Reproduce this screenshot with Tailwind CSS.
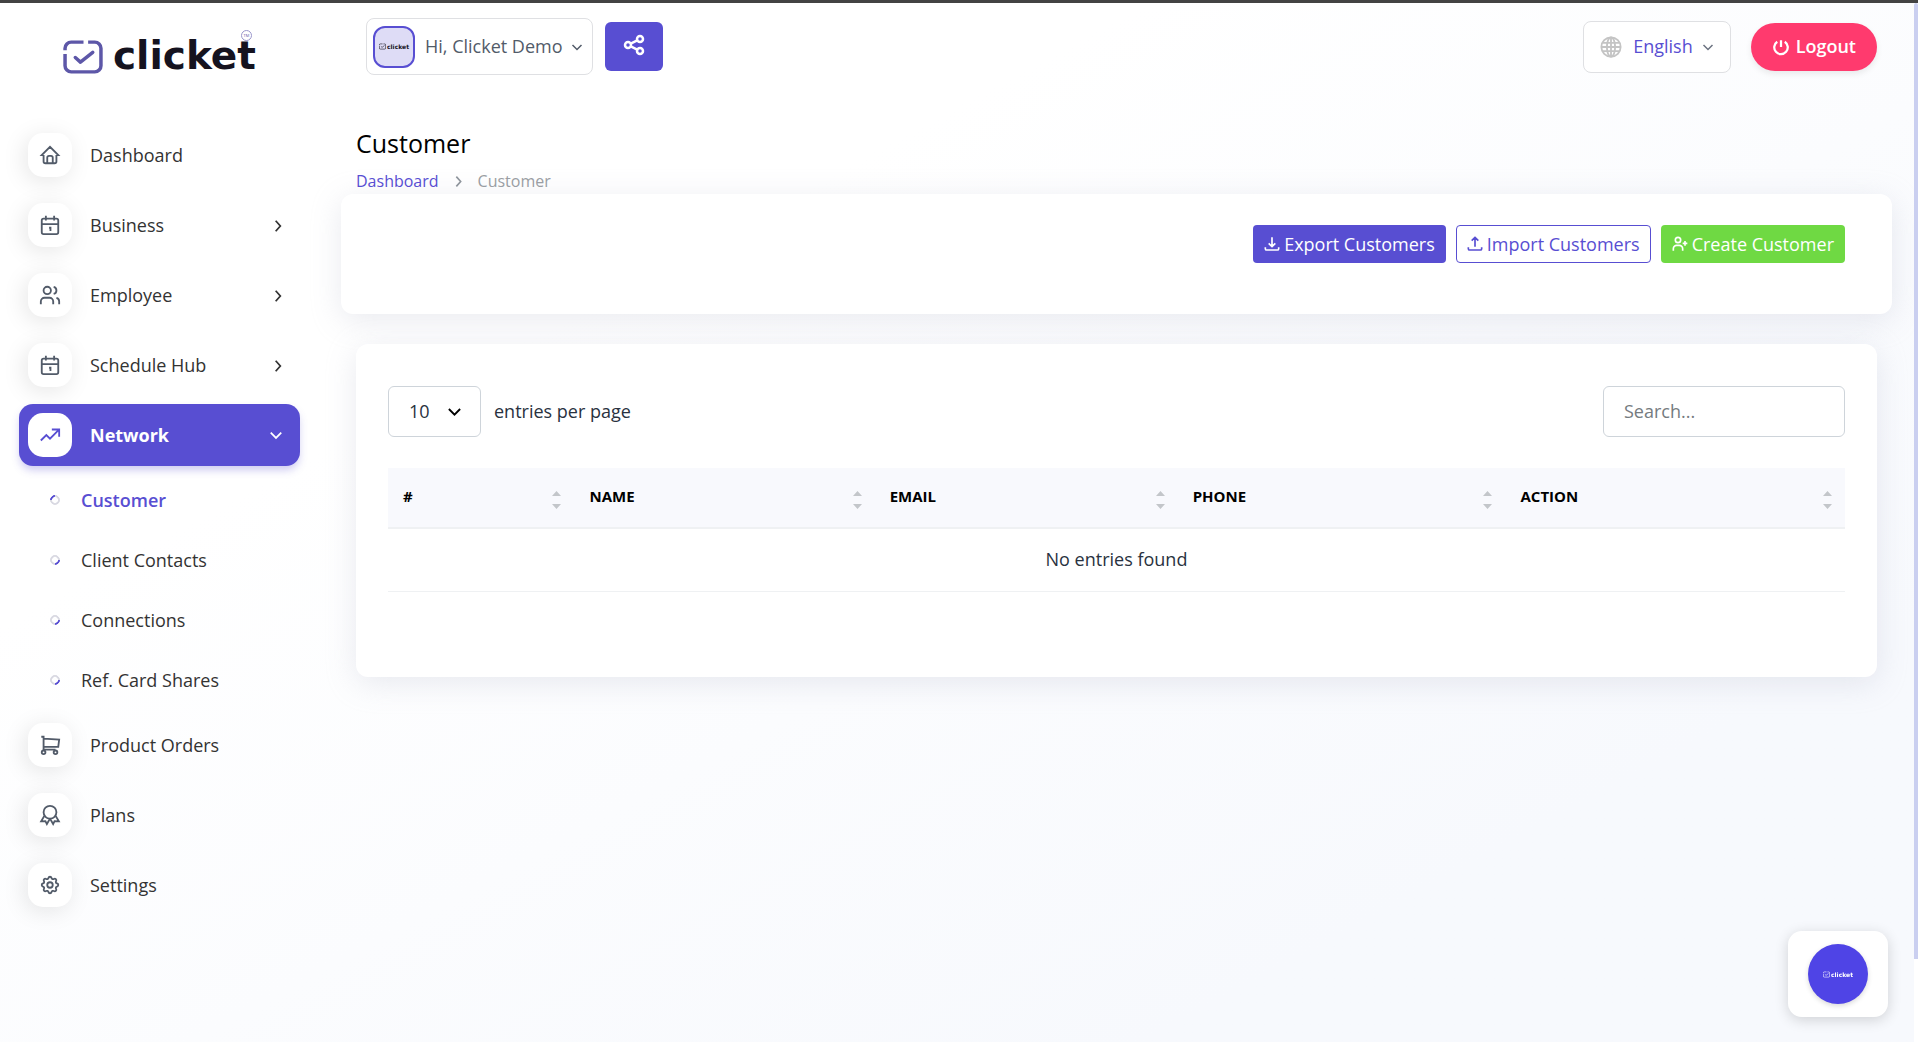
<!DOCTYPE html>
<html lang="en">
  <head>
    <title>Customer - Clicket</title>
    <meta charset="UTF-8" />
    <meta name="viewport" content="width=device-width, initial-scale=1.0" />
    <script src="https://cdn.jsdelivr.net/npm/@tailwindcss/browser@4"></script>
  </head>
  <body class="min-h-screen overflow-x-hidden border-t-3 border-[#434343] bg-linear-to-br from-white from-30% to-[#f7f9fd] to-80% font-['Open_Sans',sans-serif] text-[18px] text-[#293240]">
    <!-- Icon sprite -->
    <svg class="hidden">
      <symbol id="mark" viewBox="0 0 39 33" fill="none" stroke="currentColor" stroke-width="3.4">
        <path d="M2 10V8a6 6 0 0 1 6-6h12M24.500 2H31a6 6 0 0 1 6 6v17a6 6 0 0 1-6 6H8a6 6 0 0 1-6-6V13.500" />
        <path d="M12 17l5 4.500 12-9.500" stroke-linecap="round" stroke-linejoin="round" />
      </symbol>
      <symbol id="home" viewBox="0 0 24 24"><path d="M5 12H3l9-9 9 9h-2M5 12v7a2 2 0 0 0 2 2h10a2 2 0 0 0 2-2v-7M9 21v-6a2 2 0 0 1 2-2h2a2 2 0 0 1 2 2v6" /></symbol>
      <symbol id="calendar" viewBox="0 0 24 24"><rect x="3" y="5" width="18" height="17" rx="2" /><path d="M7.500 2v5M16.500 2v5M3 11h18M11 15h1.500v3.500" /></symbol>
      <symbol id="users" viewBox="0 0 24 24"><circle cx="9" cy="7" r="4" /><path d="M2 22v-3a4 4 0 0 1 4-4h5.500a4 4 0 0 1 4 4v3M16 3.130a4 4 0 0 1 0 7.750M22 22v-3a4 4 0 0 0-3-3.850" /></symbol>
      <symbol id="trending" viewBox="0 0 24 24"><path d="M2 18l6-6 4 4 9-9M14 6h8v8" /></symbol>
      <symbol id="cart" viewBox="0 0 24 24"><circle cx="5" cy="20" r="2" /><circle cx="18" cy="20" r="2" /><path d="M18 17H5V3H2.500M5 5l17 1-1 8H5" /></symbol>
      <symbol id="award" viewBox="0 0 24 24"><circle cx="12" cy="9" r="7" /><path d="M12 16l3.400 5.890 1.600-3.230 4.600.230-3.400-5.890M5.800 13l-3.400 5.890 4.600-.230 1.600 3.230 3.400-5.890" /></symbol>
      <symbol id="settings" viewBox="0 0 24 24"><path d="M10.325 4.317c.426-1.756 2.924-1.756 3.350 0a1.724 1.724 0 0 0 2.573 1.066c1.543-.940 3.310.826 2.370 2.370a1.724 1.724 0 0 0 1.065 2.572c1.756.426 1.756 2.924 0 3.350a1.724 1.724 0 0 0-1.066 2.573c.940 1.543-.826 3.310-2.370 2.370a1.724 1.724 0 0 0-2.572 1.065c-.426 1.756-2.924 1.756-3.350 0a1.724 1.724 0 0 0-2.573-1.066c-1.543.940-3.310-.826-2.370-2.370a1.724 1.724 0 0 0-1.065-2.572c-1.756-.426-1.756-2.924 0-3.350a1.724 1.724 0 0 0 1.066-2.573c-.940-1.543.826-3.310 2.370-2.370 1 .608 2.296.070 2.572-1.065z" /><circle cx="12" cy="12" r="3" /></symbol>
      <symbol id="share" viewBox="0 0 24 24"><circle cx="6" cy="12" r="3" /><circle cx="18" cy="6" r="3" /><circle cx="18" cy="18" r="3" /><path d="M8.700 10.700l6.600-3.400M8.700 13.300l6.600 3.400" /></symbol>
      <symbol id="power" viewBox="0 0 24 24"><path d="M7 5a9 9 0 1 0 10 0M12 3v9" /></symbol>
      <symbol id="globe" viewBox="0 0 24 24"><circle cx="12" cy="12" r="10.500" /><ellipse cx="12" cy="12" rx="4.500" ry="10.500" /><path d="M12 1.500v21M1.500 12h21M3 7.500h18M3 16.500h18" /></symbol>
      <symbol id="download" viewBox="0 0 24 24"><path d="M2 17v2a2 2 0 0 0 2 2h16a2 2 0 0 0 2-2v-2M7 11l5 5 5-5M12 2v14" /></symbol>
      <symbol id="upload" viewBox="0 0 24 24"><path d="M2 17v2a2 2 0 0 0 2 2h16a2 2 0 0 0 2-2v-2M7 7l5-5 5 5M12 3v13" /></symbol>
      <symbol id="user-plus" viewBox="0 0 24 24"><circle cx="9" cy="6" r="4" /><path d="M2 22v-3a5 5 0 0 1 5-5h4a5 5 0 0 1 5 5v3M16 11h7M19.500 7.500v7" /></symbol>
      <symbol id="chevron-right" viewBox="0 0 24 24"><path d="M8 3l8 9-8 9" /></symbol>
      <symbol id="chevron-down" viewBox="0 0 24 24"><path d="M3 8l9 9 9-9" /></symbol>
    </svg>

    <div class="flex items-start">
      <aside class="w-[319px] shrink-0 pb-8">
        <a href="#" class="flex h-[121px] items-start pt-[27px] pl-[63px] text-[#15131f]" aria-label="clicket">
          <svg class="mt-[10px] h-[34px] w-[40px] text-[#5d57a8]"><use href="#mark" /></svg>
          <span class="relative ml-[10px]">
            <span class="block font-['DejaVu_Sans'] text-[39px] leading-[52px] font-bold">clicket</span>
            <span class="absolute top-0 right-1 flex size-[11px] items-center justify-center rounded-full border border-[#9a96cc] text-[4px] leading-none text-[#5d57a8]">TM</span>
          </span>
        </a>

        <nav class="flex flex-col gap-2 pr-[19px] pl-[19px] font-medium text-[#333]">
          <a href="#" class="flex h-[62px] items-center gap-[18px] pr-[15px] pl-[9px]">
            <span class="flex size-11 items-center justify-center rounded-[15px] bg-white text-[#525b69] shadow-[-3px_4px_23px_rgba(0,0,0,0.1)]"><svg class="size-[22px] fill-none stroke-current stroke-2"><use href="#home" /></svg></span>
            Dashboard
          </a>
          <a href="#" class="flex h-[62px] items-center gap-[18px] pr-[15px] pl-[9px]">
            <span class="flex size-11 items-center justify-center rounded-[15px] bg-white text-[#525b69] shadow-[-3px_4px_23px_rgba(0,0,0,0.1)]"><svg class="size-[22px] fill-none stroke-current stroke-2"><use href="#calendar" /></svg></span>
            Business
            <svg class="mt-[2px] ml-auto size-[14px] fill-none stroke-current stroke-3"><use href="#chevron-right" /></svg>
          </a>
          <a href="#" class="flex h-[62px] items-center gap-[18px] pr-[15px] pl-[9px]">
            <span class="flex size-11 items-center justify-center rounded-[15px] bg-white text-[#525b69] shadow-[-3px_4px_23px_rgba(0,0,0,0.1)]"><svg class="size-[22px] fill-none stroke-current stroke-2"><use href="#users" /></svg></span>
            Employee
            <svg class="mt-[2px] ml-auto size-[14px] fill-none stroke-current stroke-3"><use href="#chevron-right" /></svg>
          </a>
          <a href="#" class="flex h-[62px] items-center gap-[18px] pr-[15px] pl-[9px]">
            <span class="flex size-11 items-center justify-center rounded-[15px] bg-white text-[#525b69] shadow-[-3px_4px_23px_rgba(0,0,0,0.1)]"><svg class="size-[22px] fill-none stroke-current stroke-2"><use href="#calendar" /></svg></span>
            Schedule Hub
            <svg class="mt-[2px] ml-auto size-[14px] fill-none stroke-current stroke-3"><use href="#chevron-right" /></svg>
          </a>
          <div>
            <a href="#" class="flex h-[62px] items-center gap-[18px] rounded-[14px] bg-[#584ed2] pr-[17px] pl-[9px] font-bold text-white shadow-[0_5px_8px_-1px_rgba(88,78,210,0.3)]">
              <span class="flex size-11 items-center justify-center rounded-[15px] bg-white text-[#584ed2]"><svg class="size-[22px] fill-none stroke-current stroke-2"><use href="#trending" /></svg></span>
              Network
              <svg class="ml-auto size-[14px] fill-none stroke-current stroke-3"><use href="#chevron-down" /></svg>
            </a>
            <ul class="mt-1 -mb-1 pl-[31px] font-normal">
              <li><a href="#" class="flex h-[60px] items-center gap-[21px] font-semibold text-[#584ed2]"><span class="size-[10px] rotate-45 rounded-full border-2 border-[#d9d9e2] border-l-[#584ed2]"></span>Customer</a></li>
              <li><a href="#" class="flex h-[60px] items-center gap-[21px]"><span class="size-[10px] rotate-45 rounded-full border-2 border-[#d9d9e2] border-r-[#584ed2]"></span>Client Contacts</a></li>
              <li><a href="#" class="flex h-[60px] items-center gap-[21px]"><span class="size-[10px] rotate-45 rounded-full border-2 border-[#d9d9e2] border-r-[#584ed2]"></span>Connections</a></li>
              <li><a href="#" class="flex h-[60px] items-center gap-[21px]"><span class="size-[10px] rotate-45 rounded-full border-2 border-[#d9d9e2] border-r-[#584ed2]"></span>Ref. Card Shares</a></li>
            </ul>
          </div>
          <a href="#" class="flex h-[62px] items-center gap-[18px] pr-[15px] pl-[9px]">
            <span class="flex size-11 items-center justify-center rounded-[15px] bg-white text-[#525b69] shadow-[-3px_4px_23px_rgba(0,0,0,0.1)]"><svg class="size-[22px] fill-none stroke-current stroke-2"><use href="#cart" /></svg></span>
            Product Orders
          </a>
          <a href="#" class="flex h-[62px] items-center gap-[18px] pr-[15px] pl-[9px]">
            <span class="flex size-11 items-center justify-center rounded-[15px] bg-white text-[#525b69] shadow-[-3px_4px_23px_rgba(0,0,0,0.1)]"><svg class="size-[22px] fill-none stroke-current stroke-2"><use href="#award" /></svg></span>
            Plans
          </a>
          <a href="#" class="flex h-[62px] items-center gap-[18px] pr-[15px] pl-[9px]">
            <span class="flex size-11 items-center justify-center rounded-[15px] bg-white text-[#525b69] shadow-[-3px_4px_23px_rgba(0,0,0,0.1)]"><svg class="size-[22px] fill-none stroke-current stroke-2"><use href="#settings" /></svg></span>
            Settings
          </a>
        </nav>
      </aside>

      <div class="min-w-0 flex-1 pr-[41px] pl-[37px]">
        <header class="flex h-[87px] items-center pl-[10px]">
          <button type="button" class="flex h-[57px] items-center rounded-lg border border-[#dfe0e3] bg-white px-[6px] text-[#525b69]">
            <span class="flex size-[42px] items-center justify-center gap-px rounded-xl border-2 border-[#584ed2] bg-[#dedcf6] font-['DejaVu_Sans'] text-[6px] font-bold text-[#15131f]"><svg class="size-[7px]"><use href="#mark" /></svg>clicket</span>
            <span class="ml-[10px]">Hi, Clicket Demo</span>
            <svg class="mr-[3px] ml-2 size-3 fill-none stroke-current stroke-3"><use href="#chevron-down" /></svg>
          </button>
          <button type="button" aria-label="Share" class="ml-3 flex h-[49px] w-[58px] items-center justify-center rounded-md bg-[#584ed2] pb-1 text-white">
            <svg class="size-6 fill-none stroke-current stroke-[2.5]"><use href="#share" /></svg>
          </button>
          <button type="button" class="ml-auto flex h-[52px] items-center rounded-lg border border-[#dfe0e3] bg-white px-4 text-[#584ed2]">
            <svg class="size-[22px] fill-none stroke-[#c4c4c4] stroke-2"><use href="#globe" /></svg>
            <span class="ml-[11px]">English</span>
            <svg class="ml-[9px] size-3 fill-none stroke-[#6b7280] stroke-3"><use href="#chevron-down" /></svg>
          </button>
          <button type="button" class="ml-5 flex h-12 items-center gap-[6px] rounded-full bg-[#ff3a6e] px-[21px] font-semibold text-white shadow-[0_3px_6px_rgba(0,0,0,0.08)]">
            <svg class="size-[18px] fill-none stroke-current stroke-3"><use href="#power" /></svg>
            Logout
          </button>
        </header>

        <main class="pt-[37px]">
          <h1 class="text-[25px] leading-8 font-medium text-black">Customer</h1>
          <nav class="mt-[10px] flex items-center text-base leading-6">
            <a href="#" class="text-[#584ed2]">Dashboard</a>
            <svg class="mx-[13px] size-[13px] fill-none stroke-[#8f959c] stroke-3"><use href="#chevron-right" /></svg>
            <span class="text-[#9a9ea3]">Customer</span>
          </nav>

          <section class="-mx-[15px] mt-px flex h-[120px] items-start justify-end gap-[10px] rounded-xl bg-white px-[47px] pt-[31px] shadow-[0_6px_30px_rgba(182,186,203,0.3)]">
            <button type="button" class="flex h-[38px] items-center gap-1 rounded bg-[#584ed2] px-[11px] font-medium text-white">
              <svg class="size-4 fill-none stroke-current stroke-[2.5]"><use href="#download" /></svg>Export Customers
            </button>
            <button type="button" class="flex h-[38px] items-center gap-1 rounded border border-[#584ed2] px-[10px] text-[#584ed2]">
              <svg class="size-4 fill-none stroke-current stroke-[2.5]"><use href="#upload" /></svg>Import Customers
            </button>
            <button type="button" class="flex h-[38px] items-center gap-1 rounded bg-[#6fd943] px-[11px] font-medium text-white">
              <svg class="size-4 fill-none stroke-current stroke-[2.5]"><use href="#user-plus" /></svg>Create Customer
            </button>
          </section>

          <section class="mt-[30px] rounded-xl bg-white px-8 pt-[42px] pb-[85px] shadow-[0_6px_30px_rgba(182,186,203,0.3)]">
            <div class="flex items-center">
              <div class="relative">
                <select id="per-page" class="h-[51px] w-[93px] appearance-none rounded-md border border-[#ced4da] bg-white pl-5">
                  <option>10</option>
                  <option>25</option>
                  <option>50</option>
                </select>
                <svg class="pointer-events-none absolute top-[18px] right-[19px] size-[15px] fill-none stroke-black stroke-3"><use href="#chevron-down" /></svg>
              </div>
              <label for="per-page" class="ml-[13px]">entries per page</label>
              <input type="search" aria-label="Search" placeholder="Search..." class="ml-auto h-[51px] w-[242px] rounded-md border border-[#ced4da] bg-white px-5 pb-[2px] placeholder:text-[#757b80]" />
            </div>

            <table class="mt-[31px] w-full table-fixed">
              <thead>
                <tr class="h-[60px] border-b-2 border-[#eff1f3] bg-[#f8f9fd] text-left text-[15px] font-bold text-black">
                  <th class="w-[12.8%] pr-[13px] pb-[2px] pl-[15px]"><span class="flex items-center justify-between"># <svg class="mt-[6px] h-[18px] w-[9px] fill-[#c3c6ca]"><path d="M0 5L4.500 0 9 5zM0 13h9L4.500 18z" /></svg></span></th>
                  <th class="w-[20.6%] pr-[13px] pb-[2px] pl-[15px]"><span class="flex items-center justify-between">NAME <svg class="mt-[6px] h-[18px] w-[9px] fill-[#c3c6ca]"><path d="M0 5L4.500 0 9 5zM0 13h9L4.500 18z" /></svg></span></th>
                  <th class="w-[20.8%] pr-[13px] pb-[2px] pl-[15px]"><span class="flex items-center justify-between">EMAIL <svg class="mt-[6px] h-[18px] w-[9px] fill-[#c3c6ca]"><path d="M0 5L4.500 0 9 5zM0 13h9L4.500 18z" /></svg></span></th>
                  <th class="w-[22.500%] pr-[13px] pb-[2px] pl-[15px]"><span class="flex items-center justify-between">PHONE <svg class="mt-[6px] h-[18px] w-[9px] fill-[#c3c6ca]"><path d="M0 5L4.500 0 9 5zM0 13h9L4.500 18z" /></svg></span></th>
                  <th class="pr-[13px] pb-[2px] pl-[15px]"><span class="flex items-center justify-between">ACTION <svg class="mt-[6px] h-[18px] w-[9px] fill-[#c3c6ca]"><path d="M0 5L4.500 0 9 5zM0 13h9L4.500 18z" /></svg></span></th>
                </tr>
              </thead>
              <tbody>
                <tr class="h-[63px] border-b border-[#eff1f3]">
                  <td colspan="5" class="text-center">No entries found</td>
                </tr>
              </tbody>
            </table>
          </section>
        </main>
      </div>
    </div>

    <!-- Page scrollbar -->
    <div class="fixed top-[3px] right-0 bottom-0 w-1 bg-white"><div class="h-[92%] rounded-t-sm bg-[#cacff0]"></div></div>

    <!-- Floating launcher -->
    <div class="fixed right-[30px] bottom-[25px] rounded-[14px] bg-white px-5 py-[13px] shadow-[0_3px_14px_rgba(0,0,0,0.16)]">
      <button type="button" class="flex size-[60px] items-center justify-center gap-px rounded-full bg-[#4f44e6] font-['DejaVu_Sans'] text-[6px] font-bold text-white shadow-[0_2px_5px_rgba(0,0,0,0.15)]"><svg class="size-[7px]"><use href="#mark" /></svg>clicket</button>
    </div>
  </body>
</html>
